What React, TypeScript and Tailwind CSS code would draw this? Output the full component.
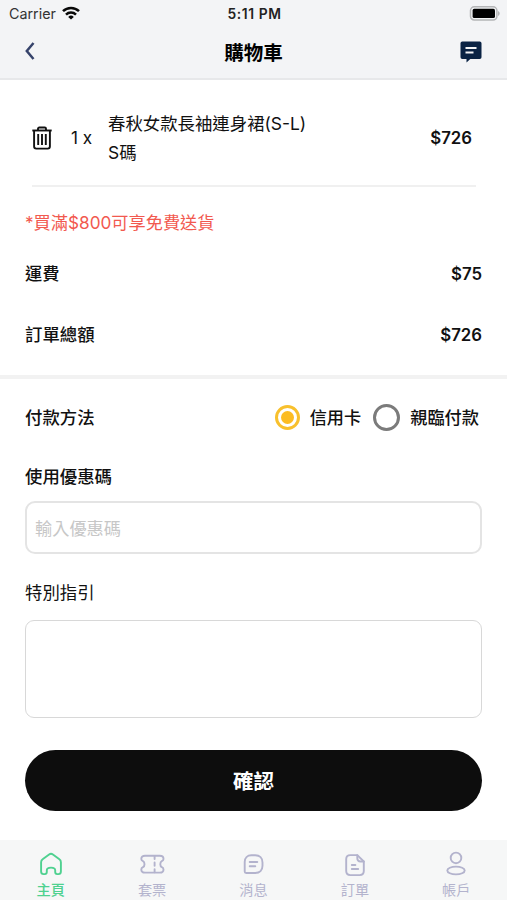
import { useState } from "react";

const TABS = [
  { id: "home", label: "主頁" },
  { id: "bundle", label: "套票" },
  { id: "message", label: "消息" },
  { id: "order", label: "訂單" },
  { id: "account", label: "帳戶" },
];

function WifiIcon() {
  return (
    <svg width="18" height="14" viewBox="0 0 18 14" fill="none" stroke="#080808" strokeWidth="2.5" className="-mt-[2px]">
      <path d="M1 5.2a11.3 11.3 0 0 1 16 0" />
      <path d="M4 8.6a7.1 7.1 0 0 1 10 0" />
      <path d="M9 13.6 6.2 10.9a4 4 0 0 1 5.6 0Z" fill="#080808" stroke="none" />
    </svg>
  );
}

function BatteryIcon() {
  return (
    <svg width="31" height="15" viewBox="0 0 31 15" className="-mt-[2px]">
      <rect x="1.5" y="0.8" width="26.4" height="13.2" rx="3.8" fill="#f3f4f6" stroke="#b4b5b7" strokeWidth="1.5" />
      <rect x="3.6" y="2.8" width="22.4" height="9.2" rx="1.6" fill="#000" />
      <path d="M29 5v5c1-.5 1.700-1.400 1.700-2.500S30 5.500 29 5Z" fill="#b4b5b7" />
    </svg>
  );
}

function ChatIcon() {
  return (
    <svg width="22" height="22" viewBox="0 0 22 22">
      <path d="M2.300.5h17.400a1.800 1.800 0 0 1 1.800 1.800v14a1.800 1.800 0 0 1-1.800 1.800H10.300L6.500 21.500V18.100H2.300a1.800 1.800 0 0 1-1.800-1.800v-14A1.800 1.800 0 0 1 2.300.5Z" fill="#0a2344" />
      <path d="M5.500 7h11M5.500 11.500h8" stroke="#f3f4f6" strokeWidth="2" />
    </svg>
  );
}

function TrashIcon() {
  return (
    <svg width="20" height="24" viewBox="0 0 20 24" fill="none" stroke="#111" strokeWidth="1.900">
      <path d="M.3 4.500h19.400" />
      <path d="M6 4.300V2.800c0-.8.500-1.300 1.300-1.300h5.400c.8 0 1.300.5 1.300 1.300v1.500" />
      <path d="M2.100 4.700v15.800c0 1.200.9 2.100 2.100 2.100h11.600c1.200 0 2.100-.9 2.100-2.100V4.700" />
      <path d="M6.200 8v11M10 8v11M13.800 8v11" />
    </svg>
  );
}

function TabIcon({ id }: { id: string }) {
  return (
    <svg width="26" height="26" viewBox="0 0 26 26" fill="none" stroke="currentColor" strokeWidth="1.900" strokeLinecap="round" strokeLinejoin="round">
      {id === "home" && (
        <path d="M3.100 11.300c0-1.300.5-2.300 1.500-3l6.500-4.900c1.200-.9 2.600-.9 3.800 0l6.500 4.900c1 .7 1.500 1.700 1.500 3v9.200c0 1.700-1 2.600-2.500 2.600h-1.200c-1.300 0-2-.8-2-2.100v-1.700c0-1.700-1.600-2.700-4.200-2.700s-4.200 1-4.200 2.700V21c0 1.300-.7 2.100-2 2.100H5.600c-1.500 0-2.500-.9-2.500-2.600Z" />
      )}
      {id === "bundle" && (
        <>
          <path d="M6 4.700h14.800c2.200 0 3.700 1.300 3.700 3.200 0 1.200-.6 1.800-1.700 2.300-2 .9-2 5 0 5.900 1.100.5 1.700 1.100 1.700 2.300 0 1.900-1.500 3.200-3.700 3.200H6c-2.200 0-3.700-1.300-3.700-3.200 0-1.200.6-1.800 1.700-2.300 2-.9 2-5 0-5.900-1.100-.5-1.700-1.100-1.700-2.300 0-1.900 1.500-3.200 3.700-3.200Z" />
          <path d="M15.600 5v3M15.600 11.500v3.200M15.600 18.300v3" />
        </>
      )}
      {id === "message" && (
        <>
          <path d="M11.300 4.300h4c4.300 0 7.200 2.900 7.200 7.200v3.300c0 4.300-2.900 7.200-7.200 7.200H6.200a1.500 1.500 0 0 1-1.500-1.500v-9.600c0-3.800 2.700-6.600 6.600-6.600Z" />
          <path d="M9.700 11h7.600M9.700 15.300h5.600" />
        </>
      )}
      {id === "order" && (
        <>
          <path d="M15.300 4.100H8.300c-2.400 0-4.100 1.600-4.100 4v12c0 2.400 1.700 4 4.100 4h9.400c2.400 0 4.100-1.600 4.100-4v-9.600Z" />
          <path d="M15.300 4.100v3.200c0 2 1.200 3.200 3.200 3.200h3.300M9.800 14h3.600M9.800 18h6.400" />
        </>
      )}
      {id === "account" && (
        <>
          <circle cx="13" cy="6.900" r="5.300" />
          <ellipse cx="13" cy="19.500" rx="8.700" ry="3.900" />
        </>
      )}
    </svg>
  );
}

function Radio({ label, checked, onSelect }: { label: string; checked: boolean; onSelect: () => void }) {
  return (
    <button type="button" role="radio" aria-checked={checked} onClick={onSelect} className="flex items-center gap-[10px] font-medium">
      {checked ? (
        <span className="flex size-[25px] items-center justify-center rounded-full border-[3px] border-[#f8c02d]">
          <span className="size-[13px] rounded-full bg-[#fcbc22]" />
        </span>
      ) : (
        <span className="size-[27px] rounded-full border-[3px] border-[#7b7b7b]" />
      )}
      {label}
    </button>
  );
}

export default function App() {
  const [payment, setPayment] = useState("card");
  const [coupon, setCoupon] = useState("");
  const [note, setNote] = useState("");
  const [tab, setTab] = useState("home");

  return (
    <div className="flex h-[900px] w-full flex-col overflow-hidden bg-white font-['Inter','Noto_Sans_CJK_TC',sans-serif] text-[17.2px] leading-6 text-[#111]">
      <header className="h-[80px] shrink-0 border-b-2 border-[#e7e8ea] bg-[#f3f4f6]">
        <div className="grid h-7 grid-cols-3 items-center pl-[9px] pr-[7px] text-[#222]">
          <div className="flex items-center gap-[6px] text-[14.3px] text-[#333]">
            <span>Carrier</span>
            <WifiIcon />
          </div>
          <div className="text-center text-[13.8px] font-semibold tracking-[0.6px]">5:11 PM</div>
          <div className="flex justify-end"><BatteryIcon /></div>
        </div>
        <div className="grid h-[48px] grid-cols-3 items-center px-[25px]">
          <button type="button" aria-label="返回">
            <svg width="10" height="18" viewBox="0 0 10 18" fill="none" stroke="#36436b" strokeWidth="2.5" className="-mt-[3px]">
              <path d="M8.500 1 1.800 9l6.700 8" />
            </svg>
          </button>
          <h1 className="pt-[2px] text-center text-[19.5px] font-bold text-black">購物車</h1>
          <div className="flex justify-end"><ChatIcon /></div>
        </div>
      </header>

      <section className="px-[25px]">
        <div className="ml-[7px] mr-[6px] flex h-[107px] items-center border-b-2 border-[#f0f0f0] pr-1 pt-[10px]">
          <button type="button" aria-label="刪除"><TrashIcon /></button>
          <span className="ml-[19px] w-[37px]">1 x</span>
          <div className="flex-1 text-[17.4px] leading-[29px]">
            <div>春秋女款長袖連身裙(S-L)</div>
            <div>S碼</div>
          </div>
          <span className="text-[16.8px] font-semibold">$726</span>
        </div>
        <p className="mt-6 text-[#f2594f]">*買滿$800可享免費送貨</p>
        <div className="mt-[27px] flex justify-between font-medium">
          <span>運費</span>
          <span className="text-[16.8px] font-semibold">$75</span>
        </div>
        <div className="mt-[37px] flex justify-between font-medium">
          <span className="text-[17.4px]">訂單總額</span>
          <span className="text-[16.8px] font-semibold">$726</span>
        </div>
      </section>

      <div className="mt-7 h-1 shrink-0 bg-[#f2f2f2]" />

      <section className="px-[25px]">
        <div className="flex h-[76px] items-center justify-between pr-[3px] pt-px font-medium">
          <span className="text-[17.4px]">付款方法</span>
          <div className="flex gap-3" role="radiogroup">
            <Radio label="信用卡" checked={payment === "card"} onSelect={() => setPayment("card")} />
            <Radio label="親臨付款" checked={payment === "visit"} onSelect={() => setPayment("visit")} />
          </div>
        </div>
        <label className="mt-[10px] block">
          <span className="block text-[17.4px] font-medium">使用優惠碼</span>
          <input
            value={coupon}
            onChange={(e) => setCoupon(e.target.value)}
            placeholder="輸入優惠碼"
            className="mt-3 block h-[53px] w-full rounded-[10px] border-2 border-[#e4e4e4] px-2 pt-[2px] outline-none placeholder:text-[#c7c7c7]"
          />
        </label>
        <label className="mt-[27px] block">
          <span className="block text-[17.4px]">特別指引</span>
          <textarea
            value={note}
            onChange={(e) => setNote(e.target.value)}
            className="mt-[15px] block h-[98px] w-full resize-none rounded-[9px] border border-[#d8d8d8] p-[10px] outline-none"
          />
        </label>
        <button type="button" className="mt-8 block h-[61px] w-full rounded-full bg-[#0d0d0d] pt-[2px] text-[20.5px] font-bold text-white">確認</button>
      </section>

      <nav className="mt-auto grid h-[60px] shrink-0 grid-cols-5 bg-[#f6f7f7]">
        {TABS.map((t) => (
          <button
            key={t.id}
            type="button"
            onClick={() => setTab(t.id)}
            className={`flex flex-col items-center pt-[11px] text-[14.2px] leading-[26px] ${tab === t.id ? "font-medium text-[#4fd190]" : "text-[#b3b3cd]"}`}
          >
            <TabIcon id={t.id} />
            {t.label}
          </button>
        ))}
      </nav>
    </div>
  );
}
